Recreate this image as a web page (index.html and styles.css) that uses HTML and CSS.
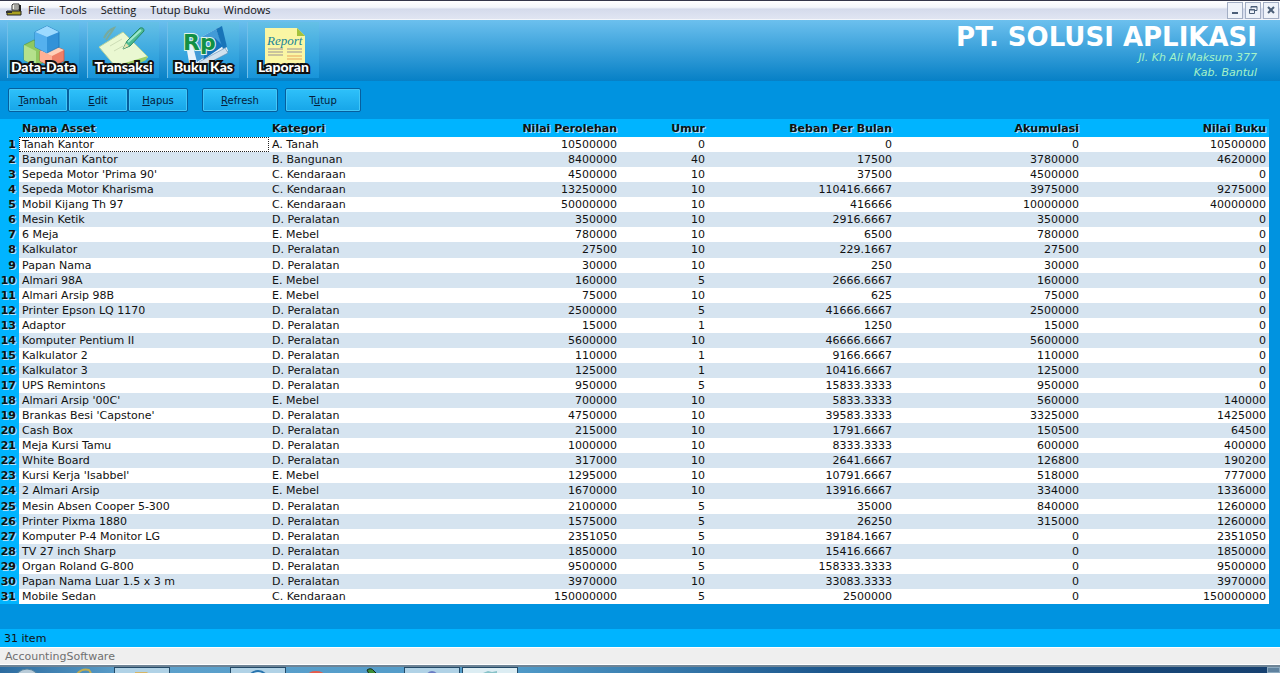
FILE: index.html
```html
<!DOCTYPE html>
<html lang="id">
<head>
<meta charset="utf-8">
<title>AccountingSoftware</title>
<link rel="stylesheet" href="styles.css">
</head>
<body>
<nav class="menubar">
  <svg class="app-icon" width="16" height="14" viewBox="0 0 16 14"><path d="M6 2l1-1h6v6H6z" fill="#f4f4ec" stroke="#333"/><path d="M8 3h4M8 5h4" stroke="#555"/><path d="M13 2h2v7h-2z" fill="#222"/><path d="M1 8h14v4H1z" fill="#a8a020" stroke="#222"/><path d="M0 8h6v2H0z" fill="#333"/></svg>
  <button type="button">File</button><button type="button">Tools</button><button type="button">Setting</button><button type="button">Tutup Buku</button><button type="button">Windows</button>
  <div class="window-buttons">
    <button type="button" aria-label="Minimize"><svg width="10" height="10" viewBox="0 0 10 10"><path d="M2 8h6" stroke="#4c5f78" stroke-width="2"/></svg></button>
    <button type="button" aria-label="Restore"><svg width="10" height="10" viewBox="0 0 10 10"><path d="M3 3.500V1.500h6v4H7M1.500 4.500h5v4h-5zM1 5h6M3 2h6" fill="none" stroke="#4c5f78"/></svg></button>
    <button type="button" aria-label="Close"><svg width="10" height="10" viewBox="0 0 10 10"><path d="M2 2l6 6M8 2L2 8" stroke="#4c5f78" stroke-width="2"/></svg></button>
  </div>
</nav>
<header class="banner">
  <div class="modules">
    <button type="button" class="module">
      <svg width="64" height="48" viewBox="0 0 64 48"><g stroke-width=".7"><path d="M12 23l10-5 12 5v16l-10 5-12-6z" fill="#8fc860" stroke="#5f9a3c"/><path d="M12 23l12 6v15l-12-6z" fill="#b5e18c"/><path d="M28 29l12-6 12 5v11l-12 6-12-6z" fill="#ee8068" stroke="#ce4e3c"/><path d="M28 29l12 5v11l-12-6z" fill="#ffb095"/><path d="M28 29l12-6 12 5-12 6z" fill="#ffd0b8"/><path d="M23 10l12-6 12 6v15l-12 6-12-6z" fill="#3292d8" stroke="#1870b8"/><path d="M23 10l12 5v16l-12-6z" fill="#55b0ee"/><path d="M23 10l12-6 12 6-12 5z" fill="#9cdaff"/></g></svg>
      <span>Data-Data</span></button>
    <button type="button" class="module">
      <svg width="64" height="48" viewBox="0 0 64 48"><path d="M12 16q4-8 10-10-3 5-8 12" fill="none" stroke="#78aa9c" stroke-width="2"/><path d="M7 25L31 10l25 25-18 9H23z" fill="#eaf8d2" stroke="#b2d2a0"/><path d="M23 44l33-10-2 4-16 8z" fill="#9ecf68"/><path d="M18 24l12-7M22 29l9-5" stroke="#cdddb6"/><path d="M31 27l4-8L48 6q4-1 4 3L38 24z" fill="#4dbb91" stroke="#278865"/><path d="M36 20L49 8" stroke="#9fe8cd" stroke-width="2"/><path d="M31 27l3-6 3 3z" fill="#e6e3b0"/></svg>
      <span>Transaksi</span></button>
    <button type="button" class="module">
      <svg width="64" height="48" viewBox="0 0 64 48"><path d="M14 23L48 5l8 24-28 17H18z" fill="#e8f3fb"/><path d="M20 20L44 7l7 17-26 16z" fill="#429bd7"/><path d="M44 7l6-3 5 21-4 2z" fill="#1874b8"/><path d="M33 31l10-15 8 8-20 14z" fill="#1472bd"/><path d="M27 40l26-14 3 5-27 14z" fill="#d1e1ee" stroke="#5f88ac" stroke-width=".6"/><text class="rupiah" x="11" y="28">Rp</text></svg>
      <span>Buku Kas</span></button>
    <button type="button" class="module">
      <svg width="64" height="48" viewBox="0 0 64 48"><path d="M13 6h32l8 8v32H13z" fill="#faf6a4"/><path d="M45 6l8 8h-8z" fill="#a4c23c"/><text class="report" x="15" y="23">Report</text><path d="M16 27h15M16 30h15M16 33h15M35 27h15M35 30h15" stroke="#b9b29b" stroke-width="1.500"/><path d="M35 34h15M35 37h15" stroke="#e7a45c"/></svg>
      <span>Laporan</span></button>
  </div>
  <div class="company">
    <h1>PT. SOLUSI APLIKASI</h1>
    <p>Jl. Kh Ali Maksum 377</p>
    <p>Kab. Bantul</p>
  </div>
</header>
<div class="toolbar">
  <div class="group"><button type="button"><u>T</u>ambah</button><button type="button"><u>E</u>dit</button><button type="button"><u>H</u>apus</button></div>
  <button type="button" class="wide"><u>R</u>efresh</button>
  <button type="button" class="wide">T<u>u</u>tup</button>
</div>
<main>
<table>
<colgroup><col class="c-no"><col class="c-name"><col><col class="c-money"><col class="c-age"><col class="c-money"><col class="c-money"><col class="c-money"></colgroup>
<thead><tr><td></td><th scope="col">Nama Asset</th><th scope="col">Kategori</th><th scope="col">Nilai Perolehan</th><th scope="col">Umur</th><th scope="col">Beban Per Bulan</th><th scope="col">Akumulasi</th><th scope="col">Nilai Buku</th></tr></thead>
<tbody>
<tr><th scope="row">1</th><td class="focused">Tanah Kantor</td><td>A. Tanah</td><td>10500000</td><td>0</td><td>0</td><td>0</td><td>10500000</td></tr>
<tr><th scope="row">2</th><td>Bangunan Kantor</td><td>B. Bangunan</td><td>8400000</td><td>40</td><td>17500</td><td>3780000</td><td>4620000</td></tr>
<tr><th scope="row">3</th><td>Sepeda Motor 'Prima 90'</td><td>C. Kendaraan</td><td>4500000</td><td>10</td><td>37500</td><td>4500000</td><td>0</td></tr>
<tr><th scope="row">4</th><td>Sepeda Motor Kharisma</td><td>C. Kendaraan</td><td>13250000</td><td>10</td><td>110416.6667</td><td>3975000</td><td>9275000</td></tr>
<tr><th scope="row">5</th><td>Mobil Kijang Th 97</td><td>C. Kendaraan</td><td>50000000</td><td>10</td><td>416666</td><td>10000000</td><td>40000000</td></tr>
<tr><th scope="row">6</th><td>Mesin Ketik</td><td>D. Peralatan</td><td>350000</td><td>10</td><td>2916.6667</td><td>350000</td><td>0</td></tr>
<tr><th scope="row">7</th><td>6 Meja</td><td>E. Mebel</td><td>780000</td><td>10</td><td>6500</td><td>780000</td><td>0</td></tr>
<tr><th scope="row">8</th><td>Kalkulator</td><td>D. Peralatan</td><td>27500</td><td>10</td><td>229.1667</td><td>27500</td><td>0</td></tr>
<tr><th scope="row">9</th><td>Papan Nama</td><td>D. Peralatan</td><td>30000</td><td>10</td><td>250</td><td>30000</td><td>0</td></tr>
<tr><th scope="row">10</th><td>Almari 98A</td><td>E. Mebel</td><td>160000</td><td>5</td><td>2666.6667</td><td>160000</td><td>0</td></tr>
<tr><th scope="row">11</th><td>Almari Arsip 98B</td><td>E. Mebel</td><td>75000</td><td>10</td><td>625</td><td>75000</td><td>0</td></tr>
<tr><th scope="row">12</th><td>Printer Epson LQ 1170</td><td>D. Peralatan</td><td>2500000</td><td>5</td><td>41666.6667</td><td>2500000</td><td>0</td></tr>
<tr><th scope="row">13</th><td>Adaptor</td><td>D. Peralatan</td><td>15000</td><td>1</td><td>1250</td><td>15000</td><td>0</td></tr>
<tr><th scope="row">14</th><td>Komputer Pentium II</td><td>D. Peralatan</td><td>5600000</td><td>10</td><td>46666.6667</td><td>5600000</td><td>0</td></tr>
<tr><th scope="row">15</th><td>Kalkulator 2</td><td>D. Peralatan</td><td>110000</td><td>1</td><td>9166.6667</td><td>110000</td><td>0</td></tr>
<tr><th scope="row">16</th><td>Kalkulator 3</td><td>D. Peralatan</td><td>125000</td><td>1</td><td>10416.6667</td><td>125000</td><td>0</td></tr>
<tr><th scope="row">17</th><td>UPS Remintons</td><td>D. Peralatan</td><td>950000</td><td>5</td><td>15833.3333</td><td>950000</td><td>0</td></tr>
<tr><th scope="row">18</th><td>Almari Arsip '00C'</td><td>E. Mebel</td><td>700000</td><td>10</td><td>5833.3333</td><td>560000</td><td>140000</td></tr>
<tr><th scope="row">19</th><td>Brankas Besi 'Capstone'</td><td>D. Peralatan</td><td>4750000</td><td>10</td><td>39583.3333</td><td>3325000</td><td>1425000</td></tr>
<tr><th scope="row">20</th><td>Cash Box</td><td>D. Peralatan</td><td>215000</td><td>10</td><td>1791.6667</td><td>150500</td><td>64500</td></tr>
<tr><th scope="row">21</th><td>Meja Kursi Tamu</td><td>D. Peralatan</td><td>1000000</td><td>10</td><td>8333.3333</td><td>600000</td><td>400000</td></tr>
<tr><th scope="row">22</th><td>White Board</td><td>D. Peralatan</td><td>317000</td><td>10</td><td>2641.6667</td><td>126800</td><td>190200</td></tr>
<tr><th scope="row">23</th><td>Kursi Kerja 'Isabbel'</td><td>E. Mebel</td><td>1295000</td><td>10</td><td>10791.6667</td><td>518000</td><td>777000</td></tr>
<tr><th scope="row">24</th><td>2 Almari Arsip</td><td>E. Mebel</td><td>1670000</td><td>10</td><td>13916.6667</td><td>334000</td><td>1336000</td></tr>
<tr><th scope="row">25</th><td>Mesin Absen Cooper 5-300</td><td>D. Peralatan</td><td>2100000</td><td>5</td><td>35000</td><td>840000</td><td>1260000</td></tr>
<tr><th scope="row">26</th><td>Printer Pixma 1880</td><td>D. Peralatan</td><td>1575000</td><td>5</td><td>26250</td><td>315000</td><td>1260000</td></tr>
<tr><th scope="row">27</th><td>Komputer P-4 Monitor LG</td><td>D. Peralatan</td><td>2351050</td><td>5</td><td>39184.1667</td><td>0</td><td>2351050</td></tr>
<tr><th scope="row">28</th><td>TV 27 inch Sharp</td><td>D. Peralatan</td><td>1850000</td><td>10</td><td>15416.6667</td><td>0</td><td>1850000</td></tr>
<tr><th scope="row">29</th><td>Organ Roland G-800</td><td>D. Peralatan</td><td>9500000</td><td>5</td><td>158333.3333</td><td>0</td><td>9500000</td></tr>
<tr><th scope="row">30</th><td>Papan Nama Luar 1.5 x 3 m</td><td>D. Peralatan</td><td>3970000</td><td>10</td><td>33083.3333</td><td>0</td><td>3970000</td></tr>
<tr><th scope="row">31</th><td>Mobile Sedan</td><td>C. Kendaraan</td><td>150000000</td><td>5</td><td>2500000</td><td>0</td><td>150000000</td></tr>
</tbody>
</table>
</main>
<div class="count">31 item</div>
<footer class="status">AccountingSoftware</footer>
<div class="taskbar">
  <span class="task start"><svg width="28" height="7" viewBox="0 0 28 7"><circle cx="14" cy="15" r="13" fill="#b8cbd8" stroke="#54819d"/></svg></span>
  <span class="task"><svg width="20" height="7" viewBox="0 0 20 7"><path d="M3 7q5-6 12-4l2 3" fill="none" stroke="#c3ae50" stroke-width="2"/></svg></span>
  <span class="task open"><svg width="20" height="7" viewBox="0 0 20 7"><path d="M3 4h12l2 2v1H3z" fill="#d6b566"/></svg></span>
  <span class="task"></span>
  <span class="task open"><svg width="24" height="7" viewBox="0 0 24 7"><circle cx="12" cy="13" r="10" fill="#d7edf8" stroke="#2874ae" stroke-width="2"/></svg></span>
  <span class="task"><svg width="20" height="7" viewBox="0 0 20 7"><ellipse cx="10" cy="9" rx="9" ry="5" fill="#e75b4b"/></svg></span>
  <span class="task"><svg width="20" height="7" viewBox="0 0 20 7"><path d="M3 3q4-3 7 1l3 3H5z" fill="#3d8d35" stroke="#14281a"/></svg></span>
  <span class="task open"><svg width="20" height="7" viewBox="0 0 20 7"><circle cx="10" cy="9" r="6" fill="#6b7dc4"/></svg></span>
  <span class="task open current"><svg width="20" height="7" viewBox="0 0 20 7"><path d="M3 5l5-2 4 1 5-1v4H3z" fill="#88c2c8"/></svg></span>
  <span class="show-desktop"></span>
</div>
</body>
</html>
```
FILE: styles.css
```css
* { box-sizing: border-box; }
body {
  margin: 0;
  min-height: 100vh;
  display: flex;
  flex-direction: column;
  background: #0093e0;
  color: #111;
  font: 11px/16px "DejaVu Sans", sans-serif;
}
button { font: inherit; color: inherit; border: 0; padding: 0; background: none; }

.menubar {
  display: flex;
  align-items: center;
  height: 20px;
  padding-left: 6px;
  border-top: 1px solid #34364a;
  border-bottom: 1px solid #f4f6fb;
  background: linear-gradient(#fff 0, #f4f6fb 35%, #d5dbec 45%, #e0e5f2);
  font: 11px/16px "Open Sans", sans-serif;
}
.app-icon { margin-right: 6px; }
.menubar > button { margin-right: 14px; }
.window-buttons { display: flex; gap: 2px; margin-left: auto; padding-right: 1px; }
.window-buttons button {
  display: grid;
  place-items: center;
  width: 16px;
  height: 17px;
  border: 1px solid #a3aec4;
  background: #eff3fa;
}

.banner {
  display: flex;
  justify-content: space-between;
  height: 61px;
  padding: 2px 23px 0 7px;
  background: linear-gradient(#6cc0ee, #0680c6);
}
.modules { display: flex; gap: 8px; }
.module {
  display: flex;
  flex-direction: column;
  align-items: center;
  width: 72px;
  height: 56px;
  border-left: 1px solid #72bfe9;
  background: linear-gradient(#65c0e6, #1794da);
}
.module svg { flex: none; }
.module span {
  margin-top: -12px;
  color: #fff;
  font: 900 14px/18px "Lato", sans-serif;
  white-space: nowrap;
  -webkit-text-stroke: 4px #101010;
  paint-order: stroke fill;
}
.rupiah { font: bold 22px "DejaVu Sans", sans-serif; fill: #129044; stroke: #dff3ea; stroke-width: 2px; paint-order: stroke; }
.report { font: italic 13px "Liberation Serif", serif; fill: #188398; }
.company { color: #a5f4c8; text-align: right; }
.company h1 { margin: 3px 0 0; color: #fff; font: bold 26px/25px "DejaVu Sans", sans-serif; }
.company p { margin: 0; font-style: italic; line-height: 15px; }

.toolbar { display: flex; gap: 7px; height: 38px; padding: 7px 8px; }
.group { display: flex; margin-right: 7px; }
.toolbar button {
  width: 60px;
  height: 24px;
  padding-top: 2px;
  border: 1px solid #075e9d;
  border-radius: 2px;
  background: linear-gradient(#2fc1fa, #16a5e8);
  box-shadow: inset 0 0 0 1px #42c7f7;
  color: #04203a;
  font: 10px/16px "DejaVu Sans", sans-serif;
}
.toolbar .wide { width: 76px; }

main { flex: 1; display: grid; padding: 0 11px 25px 0; }
table { width: 100%; table-layout: fixed; border-collapse: collapse; background: #fff; }
.c-no { width: 19px; }
.c-name { width: 250px; }
.c-money { width: 187px; }
.c-age { width: 88px; }
th, td { height: 15px; padding: 1px 3px 0; text-align: right; white-space: nowrap; line-height: 14px; }
thead td, thead th { height: 18px; }
thead, tbody th { background: #00b4ff; text-shadow: 1px 1px 0 #b4e2f6; }
tbody th { padding-left: 0; }
tbody tr:nth-child(even) { background: #d6e4f0; }
th:nth-child(2), td:nth-child(2), th:nth-child(3), td:nth-child(3) { text-align: left; }
.focused { outline: 1px dotted #222; outline-offset: -1px; }

.count { height: 18px; padding: 2px 4px 0; background: #00b4ff; }
.status { height: 18px; padding: 1px 5px 0; border: solid #fff; border-width: 1px 0; background: #efefef; color: #707070; }
.taskbar {
  display: flex;
  height: 8px;
  border-top: 2px solid #6e8496;
  background: linear-gradient(90deg, #2c6b9f, #5da1cc 10%, #509bc9 40%, #1c568c 65%, #16406f);
}
.task { display: flex; justify-content: center; width: 56px; margin-right: 2px; overflow: hidden; }
.start { width: 54px; }
.open { border: 1px solid #234a68; border-bottom: 0; background: #b0d2e6; }
.current { background: #dcedf3; }
.show-desktop { width: 13px; margin-left: auto; border: 1px solid #8ba9bf; background: #5f829f; }
```
